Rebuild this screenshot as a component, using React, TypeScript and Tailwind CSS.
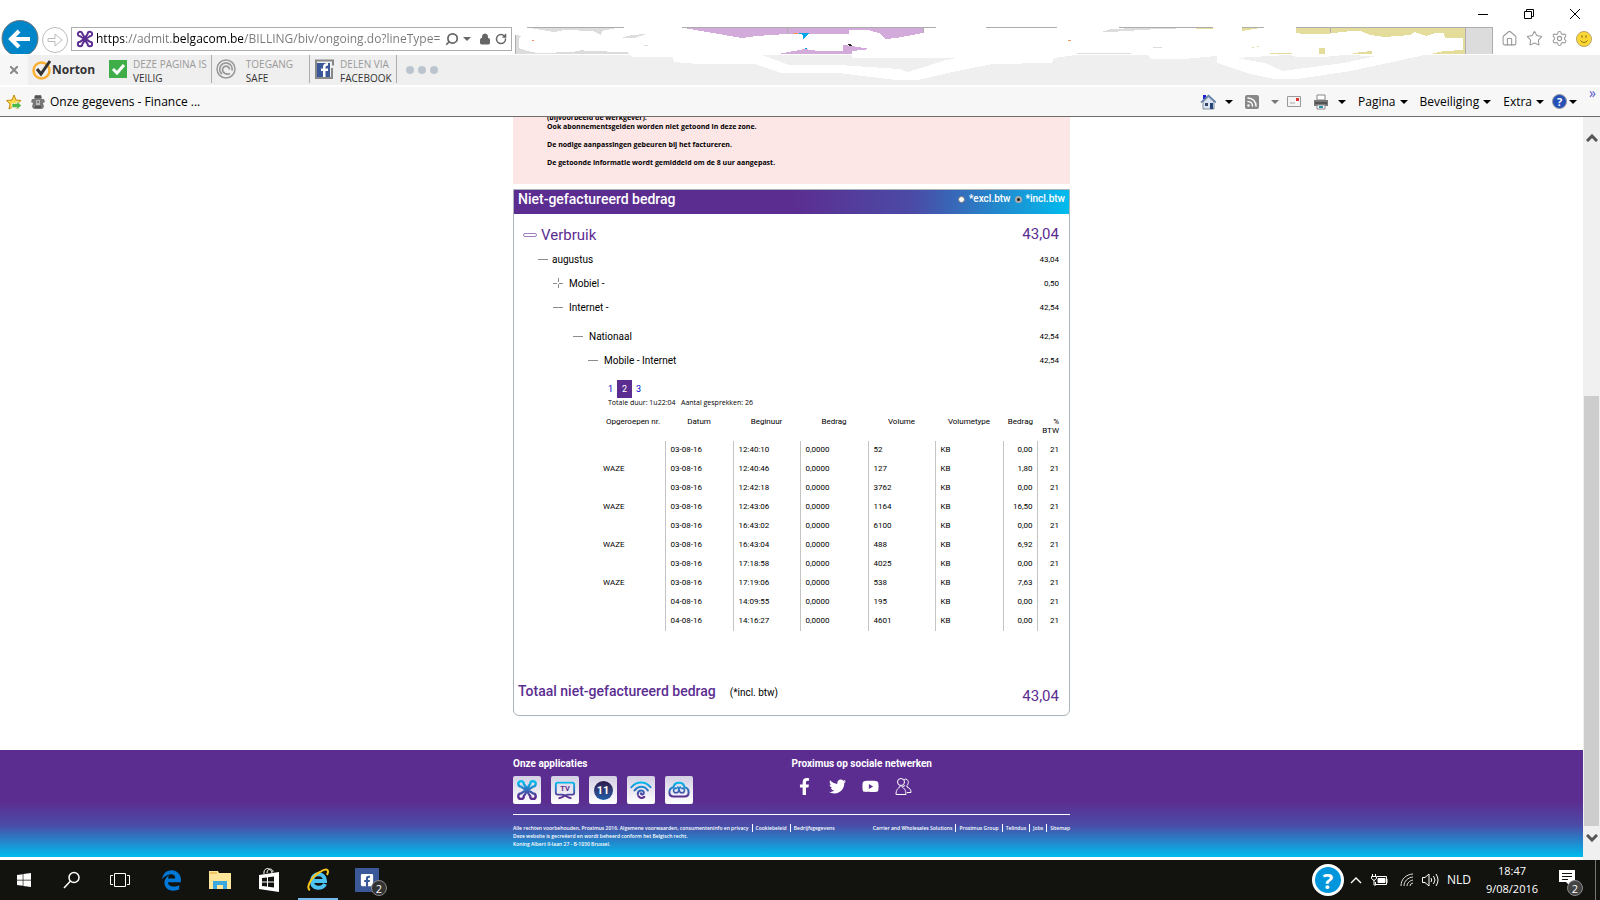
import type { ReactNode } from 'react'
import { FaFacebookF, FaFacebookSquare, FaTwitter, FaYoutube, FaWindows, FaEdgeLegacy } from 'react-icons/fa'
import { Search, Lock, RotateCw, Settings, Star, House, Rss } from 'lucide-react'

interface Call {
  number: string
  date: string
  time: string
  volume: string
  amount: string
}

const calls: Call[] = [
  { number: '', date: '03-08-16', time: '12:40:10', volume: '52', amount: '0,00' },
  { number: 'WAZE', date: '03-08-16', time: '12:40:46', volume: '127', amount: '1,80' },
  { number: '', date: '03-08-16', time: '12:42:18', volume: '3762', amount: '0,00' },
  { number: 'WAZE', date: '03-08-16', time: '12:43:06', volume: '1164', amount: '16,50' },
  { number: '', date: '03-08-16', time: '16:43:02', volume: '6100', amount: '0,00' },
  { number: 'WAZE', date: '03-08-16', time: '16:43:04', volume: '488', amount: '6,92' },
  { number: '', date: '03-08-16', time: '17:18:58', volume: '4025', amount: '0,00' },
  { number: 'WAZE', date: '03-08-16', time: '17:19:06', volume: '538', amount: '7,63' },
  { number: '', date: '04-08-16', time: '14:09:55', volume: '195', amount: '0,00' },
  { number: '', date: '04-08-16', time: '14:16:27', volume: '4601', amount: '0,00' },
]

function Knot({ stroke, className }: { stroke: string; className: string }) {
  return (
    <svg viewBox="0 0 24 24" fill="none" stroke={stroke} strokeWidth="2.6" className={className}>
      <path d="M8.500 5.300A3 3 0 1 0 5.500 8.300Q12 14 18.500 8.300A3 3 0 1 0 15.500 5.300Q9.500 12 15.500 18.700A3 3 0 1 0 18.500 15.700Q12 10 5.500 15.700A3 3 0 1 0 8.500 18.700Q14.500 12 8.500 5.300z" />
    </svg>
  )
}

function Caret({ className = 'text-black' }: { className?: string }) {
  return (
    <svg viewBox="0 0 8 4" className={`h-1 w-2 shrink-0 ${className}`} fill="currentColor">
      <path d="M0 0h8L4 4z" />
    </svg>
  )
}

/* Tab strip, mostly painted over in white */
function TabStrip() {
  return (
    <svg className="relative z-10 ml-[2px] h-[27px] w-[980px] shrink-0 overflow-visible" shapeRendering="crispEdges">
      <g fill="#dcdcdc">
        <path d="M16 1L40 5L50 3L79 4L87 8L88 4L102 1z" />
        <path d="M2 8L8 9L5 11V21L13 24L24 26L59 25L68 23L72 24L113 25L115 27H2z" />
        <path d="M107 11L118 8L132 7L120 11z M130 18h4v1h-4z" />
        <path d="M587 5L597 2L622 1H680L644 2L612 4L596 5z M563 26h54v1h-54z M639 20h9v1h-9z M952 1h26v26h-26z" />
      </g>
      <g fill="#d3abda">
        <path d="M170 1L228 11L243 9L273 7H335V3H354L365 6L371 12L382 11L393 9L409 6V1z" />
        <path d="M264 27L291 22L304 24H329V18L338 19L356 22L338 24V27z" />
      </g>
      <g fill="#e4dc9a">
        <path d="M682 1h17v1h-17z M728 1h18L728 4z" />
        <path d="M782 1V6L790 7H812L837 4H847L856 8L871 10L896 8L901 5L912 9L921 6H930L931 11H951V1z" />
        <path d="M951 11V27H917L930 24L949 23V11z M756 26h22v1h-22z M805 21h6v6h-6z M836 27L847 25L858 24V27z" />
        <path d="M738 20h2v1h-2z M743 19h2v1h-2z" />
      </g>
      <path
        d="M13 0h97v1H13z M168 0h254v1H168z M472 0h71v1h-71z M605 0h94v1h-94z M728 0h22v1h-22z M782 0h196v1H782z M1 8h1v19H1z M273 1h1v6h-1z M409 1h1v5h-1z M816 1h1v5h-1z M951 1h1v26h-1z M978 0h1v27h-1z"
        fill="#adadad"
      />
      <path d="M279 6h5v1h-5z M18 13h2v1h-2z M554 13h3v1h-3z" fill="#f29264" />
      <path d="M284 6h11l-2 3l-4 3v-4z M291 21h2v1h-2z" fill="#00a4e8" />
      <path d="M333 17h3l3 2h-3z" fill="#29202c" />
      <path
        fill="#fff"
        fillRule="evenodd"
        d="M115 27L118 30H159L160 35L184 37H240L268 46H325L382 53H404L443 44L479 37L538 36L540 31L562 28H633L637 32H669L703 29V36L737 47L760 52H783L837 44L883 34L915 27z M248 28L275 38L325 38L386 42L393 45L407 41L432 33L443 31H338V28z M722 31L751 36L769 44L783 42L830 36L862 29L830 28L810 30H783L776 28L755 29z"
      />
    </svg>
  )
}

function NortonItem({ icon, top, bottom, wide }: { icon: ReactNode; top: string; bottom: string; wide?: boolean }) {
  return (
    <div className={`flex h-7 items-center gap-1.5 border-r border-[#adadad] pl-1 ${wide ? 'pr-4' : 'pr-1'}`}>
      {icon}
      <div className="pt-1 text-[10px] leading-[14px]">
        <div className="text-[#9a9a9a]">{top}</div>
        <div className="text-[#333]">{bottom}</div>
      </div>
    </div>
  )
}

function BrowserChrome() {
  return (
    <header className="shrink-0 border-b border-[#6d6d6d] bg-white font-['Open_Sans',sans-serif] text-black">
      <div className="flex h-[27px] items-center justify-end gap-[34px] pr-[19px]">
        <button aria-label="Minimaliseren">
          <svg className="size-3" stroke="#000" fill="none"><path d="M1 6.5h10" /></svg>
        </button>
        <button aria-label="Verkleinen">
          <svg className="size-3" stroke="#000" fill="none"><path d="M1.500 3.500h7v7h-7z M3.500 3.500v-2h7v7h-2" /></svg>
        </button>
        <button aria-label="Sluiten">
          <svg className="size-3" stroke="#000" fill="none"><path d="M1 1l10 10M11 1l-10 10" /></svg>
        </button>
      </div>

      <div className="flex h-[27px]">
        <button aria-label="Terug" className="relative ml-px w-[38px] shrink-0">
          <svg viewBox="0 0 38 34" className="absolute bottom-0 left-0 h-[34px] w-[38px]">
            <circle cx="19" cy="18.500" r="18" fill="#0086c8" stroke="#777" />
            <path d="M29 19H11M18 11l-8 8 8 8" stroke="#fff" strokeWidth="4" fill="none" />
          </svg>
        </button>
        <button aria-label="Vooruit" className="ml-[3px] shrink-0 pb-1">
          <svg viewBox="0 0 26 26" className="size-[26px]" fill="#fff" stroke="#bbb">
            <circle cx="13" cy="13" r="12.500" />
            <path d="M6 11.500h7V7l7 6-7 6v-4.500H6z" />
          </svg>
        </button>
        <form className="ml-[3px] flex h-6 w-[441px] shrink-0 items-center border border-[#adadad] pl-1 pr-1">
          <Knot stroke="#5c2d91" className="size-[18px] shrink-0" />
          <input
            aria-label="Adres"
            readOnly
            defaultValue="https://admit.belgacom.be/BILLING/biv/ongoing.do?lineType=MOBILE"
            className="ml-0.5 w-[346px] bg-[linear-gradient(90deg,#000_0_29px,#777_29px_76px,#000_76px_147px,#777_147px)] bg-clip-text text-xs text-transparent outline-none"
          />
          <Search className="ml-1 size-[14px] shrink-0 -scale-x-100 text-[#666]" strokeWidth={3} />
          <Caret className="ml-1 text-[#666]" />
          <Lock className="ml-2 size-3 shrink-0 text-[#666]" fill="#666" />
          <RotateCw className="ml-1 size-3 shrink-0 text-[#666]" strokeWidth={3} />
        </form>
        <TabStrip />
        <div className="ml-auto flex items-center gap-2 pb-1 pr-2 text-[#999]">
          <House className="size-[17px]" strokeWidth={1.5} />
          <Star className="size-[17px]" strokeWidth={1.5} />
          <Settings className="size-[17px]" strokeWidth={1.5} />
          <svg viewBox="0 0 16 16" className="size-4">
            <circle cx="8" cy="8" r="7.500" fill="#fdd835" stroke="#b9a26a" />
            <path d="M6 4v3M10 4v3M4.500 9.500q3.500 4 7 0" stroke="#8a6d1a" fill="none" />
          </svg>
        </div>
      </div>

      <div className="mt-px flex h-[30px] bg-[#efefef]">
        <button className="w-7 shrink-0 bg-[#f7f7f7]" aria-label="Werkbalk sluiten">
          <svg viewBox="0 0 8 8" className="mx-auto size-2" stroke="#888" strokeWidth="2"><path d="M0 0l8 8M8 0l-8 8" /></svg>
        </button>
        <div className="ml-1 flex w-[73px] items-center">
          <svg viewBox="0 0 20 20" className="size-5 shrink-0" fill="none">
            <circle cx="9.500" cy="10.500" r="8" stroke="#fbb034" strokeWidth="2.500" />
            <path d="M5 9l4 5L18 1" stroke="#333" strokeWidth="3" />
          </svg>
          <span className="text-xs font-bold text-[#333]">Norton</span>
        </div>
        <NortonItem
          top="DEZE PAGINA IS"
          bottom="VEILIG"
          icon={<svg viewBox="0 0 18 18" className="size-[18px]"><path d="M0 0h18v18H0z" fill="#3fae49" /><path d="M4 9l4 4 7-8" stroke="#fff" strokeWidth="3" fill="none" /></svg>}
        />
        <NortonItem
          wide
          top="TOEGANG"
          bottom="SAFE"
          icon={
            <svg viewBox="0 0 20 20" className="mr-1 size-5" fill="none" stroke="#999">
              <circle cx="10" cy="10" r="9" strokeWidth="1.500" />
              <path d="M6 15A6.200 6.200 0 1 1 16 11.500M14 14.500A5.500 5.500 0 0 1 7 12.500A3.500 3.500 0 1 1 13.500 10.500" strokeWidth="1.800" />
            </svg>
          }
        />
        <NortonItem
          top="DELEN VIA"
          bottom="FACEBOOK"
          icon={
            <svg viewBox="0 0 20 20" className="size-5">
              <path d="M15 1.500H2V19h16V9M13 1.500h6v5" stroke="#888" strokeWidth="2" fill="none" />
              <path d="M3 4h13v14H3z" fill="#3b5998" />
              <path d="M11.500 18v-6H14V9.500h-2.500V8q0-1.500 2.500-1.500V4q-5 0-5 4v1.500H7V12h2v6z" fill="#fff" />
            </svg>
          }
        />
        <div className="ml-[9px] flex items-center gap-1">
          <span className="size-2 rounded-full bg-[#bcc5ce]" />
          <span className="size-2 rounded-full bg-[#bcc5ce]" />
          <span className="size-2 rounded-full bg-[#bcc5ce]" />
        </div>
      </div>

      <nav className="mt-0.5 flex h-[29px] items-center bg-[#f7f7f7] text-xs">
        <svg viewBox="0 0 16 16" className="ml-1.5 size-4 shrink-0">
          <path d="M8 1l2 5 5 .5-4 3.500 1 5-4.500-2.500L3 15l1-5L.5 6.500 6 6z" fill="#ffd84a" stroke="#c58a12" />
          <path d="M6 9.500h5v-2l4.500 4-4.500 4v-2H6z" fill="#4cb848" stroke="#fff" strokeWidth=".6" />
        </svg>
        <svg viewBox="0 0 16 16" className="ml-2 size-4 shrink-0" fill="#777">
          <path d="M5 1h6l1 3-1 1h3l1 3-2 1 1 4-2 2H4l-2-2 1-4-2-1 1-3h3L4 4z" />
          <path d="M6 6h4v5H6z" fill="#bbb" />
          <path d="M5 3h6M7 8h2M5 13h6" stroke="#333" />
        </svg>
        <a href="#" className="ml-1">Onze gegevens - Finance ...</a>
        <div className="ml-auto flex items-center self-stretch">
          <svg viewBox="0 0 16 16" className="size-4">
            <path d="M3 1h3v4H3z" fill="#22c" />
            <path d="M3 8v7h11V8L8.500 3z" fill="#dce6f2" stroke="#567" strokeWidth=".7" />
            <path d="M1 8.500L8.500 1.500 16 8.500" stroke="#5a7aa8" strokeWidth="1.500" fill="none" />
            <path d="M5 9h3v3H5z" fill="#346" />
            <path d="M10 9h3v6h-3z" fill="#247" />
          </svg>
          <span className="ml-[9px]"><Caret /></span>
          <span className="ml-3 grid size-[14px] place-items-center rounded-xs bg-[#888]"><Rss className="size-3 text-white" strokeWidth={3} /></span>
          <span className="ml-3"><Caret className="text-[#777]" /></span>
          <svg viewBox="0 0 14 11" className="ml-2 h-[11px] w-[14px]">
            <path d="M.5.500h13v10H.5z" fill="#f4f4f4" stroke="#999" />
            <path d="M9 2h3v3H9z" fill="#d33" />
            <path d="M3 7h5" stroke="#aaa" />
          </svg>
          <svg viewBox="0 0 16 16" className="ml-3 size-4">
            <path d="M4 1h8v5H4z" fill="#fff" stroke="#888" />
            <path d="M1 6h14v6H1z" fill="#777" />
            <path d="M2 9h12" stroke="#333" />
            <path d="M4 11h8v4H4z" fill="#fff" stroke="#888" />
            <path d="M6 13h4" stroke="#2a8fa8" strokeWidth="2" />
          </svg>
          <span className="ml-[9px]"><Caret /></span>
          <button className="ml-3 flex items-center gap-1">Pagina <Caret /></button>
          <button className="ml-3 flex items-center gap-1">Beveiliging <Caret /></button>
          <button className="ml-3 flex items-center gap-1">Extra <Caret /></button>
          <button aria-label="Help" className="ml-2 flex items-center gap-0.5">
            <span className="grid size-[15px] place-items-center rounded-full border border-[#999] bg-[#2450b8] text-[11px] leading-none font-bold text-white">?</span>
            <Caret />
          </button>
          <span className="ml-3 mr-1 self-start text-sm leading-[12px] text-[#55c]">»</span>
        </div>
      </nav>
    </header>
  )
}

interface TreeRowProps {
  label: string
  value: string
  indent: string
  gap?: string
  collapsed?: boolean
}

function TreeRow({ label, value, indent, gap = 'gap-[6px]', collapsed }: TreeRowProps) {
  return (
    <div className={`flex h-6 items-center ${indent}`}>
      <button className={`flex items-center text-[10px] ${gap}`}>
        <svg viewBox="0 0 10 10" className="size-[10px]" stroke="#8c8c8c">
          <path d={collapsed ? 'M0 5.500h4M6 5.500h4M5.500 0v4M5.500 6v4' : 'M0 5.500h10'} />
        </svg>
        {label}
      </button>
      <span className="ml-auto pt-0.5 text-[8px]">{value}</span>
    </div>
  )
}

function CallTable() {
  const cell = 'border-l border-[#c4c4c4] px-[5px] pb-0.5 text-left'
  return (
    <table className="w-full table-fixed border-collapse text-[8px] leading-[9px]">
      <colgroup>
        <col />
        <col className="w-[68px]" />
        <col className="w-[67px]" />
        <col className="w-[68px]" />
        <col className="w-[67px]" />
        <col className="w-[68px]" />
        <col className="w-[34px]" />
        <col className="w-[22px]" />
      </colgroup>
      <thead>
        <tr className="h-6 align-top [&>th]:font-normal">
          <th>Opgeroepen nr.</th>
          <th>Datum</th>
          <th>Beginuur</th>
          <th>Bedrag</th>
          <th>Volume</th>
          <th>Volumetype</th>
          <th className="pr-1 text-right">Bedrag</th>
          <th className="text-right">% BTW</th>
        </tr>
      </thead>
      <tbody>
        {calls.map((c) => (
          <tr key={c.time} className="h-[19px]">
            <td className="pb-0.5 pl-[2px]">{c.number}</td>
            <td className={cell}>{c.date}</td>
            <td className={cell}>{c.time}</td>
            <td className={cell}>0,0000</td>
            <td className={cell}>{c.volume}</td>
            <td className={cell}>KB</td>
            <td className="border-l border-[#c4c4c4] pr-1 pb-0.5 text-right">{c.amount}</td>
            <td className="border-l border-[#c4c4c4] pb-0.5 text-right">21</td>
          </tr>
        ))}
      </tbody>
    </table>
  )
}

function BillingCard() {
  return (
    <section className="mt-[5px] rounded-b-md border border-[#a9b4bb]">
      <div className="flex h-6 items-center bg-[linear-gradient(90deg,#5c2d91_50%,#4b4ba6_72%,#00bcee)] px-1 pb-1.5 text-white">
        <h1 className="text-sm leading-[18px] font-medium">Niet-gefactureerd bedrag</h1>
        <label className="ml-auto flex items-center gap-1 text-[10px] leading-3 font-medium">
          <input type="radio" name="btw" className="size-[7px] appearance-none rounded-full border border-[#777] bg-white" />
          *excl.btw
        </label>
        <label className="ml-1 flex items-center gap-1 text-[10px] leading-3 font-medium">
          <input type="radio" name="btw" defaultChecked className="size-[7px] appearance-none rounded-full border border-[#777] bg-white checked:border-2 checked:border-[#aaa] checked:bg-[#222]" />
          *incl.btw
        </label>
      </div>

      <div className="pl-[5px] pr-[10px] pt-[9px]">
        <div className="flex h-6 items-center pl-1 text-[#5c2d91]">
          <button className="flex items-center gap-1 text-[15px]">
            <svg viewBox="0 0 14 5" className="h-[5px] w-[14px]" fill="#fff" stroke="#9d80bd">
              <rect x=".5" y=".5" width="13" height="3" rx="1.500" />
            </svg>
            Verbruik
          </button>
          <span className="ml-auto pb-0.5 text-[15px]">43,04</span>
        </div>
        <TreeRow indent="pl-[19px]" label="augustus" value="43,04" gap="gap-1" />
        <TreeRow indent="pl-[34px]" label="Mobiel -" value="0,50" collapsed />
        <TreeRow indent="pl-[34px]" label="Internet -" value="42,54" />
        <div className="mt-[5px]">
          <TreeRow indent="pl-[54px]" label="Nationaal" value="42,54" />
          <TreeRow indent="pl-[69px]" label="Mobile - Internet" value="42,54" />
        </div>

        <div className="mt-2 pl-[82px]">
          <div className="flex h-[18px] items-center gap-1 pl-[7px] text-[9px] leading-4">
            <a href="#" className="text-[#00c]">1</a>
            <a href="#" className="flex h-[18px] w-[15px] items-center justify-center bg-[#5c2d91] text-white">2</a>
            <a href="#" className="text-[#00c]">3</a>
          </div>
          <p className="pl-[7px] font-['Open_Sans',sans-serif] text-[7px] leading-[9px] font-medium">
            Totale duur: 1u22:04 &nbsp; Aantal gesprekken: 26
          </p>
          <div className="mt-[10px]">
            <CallTable />
          </div>
        </div>
      </div>

      <div className="mt-12 flex items-start pl-1 pr-[10px] pb-[7px] text-[#5c2d91]">
        <h2 className="text-sm leading-6 font-medium">Totaal niet-gefactureerd bedrag</h2>
        <span className="ml-[14px] pt-0.5 text-[10px] leading-6 text-black">(*incl. btw)</span>
        <span className="ml-auto pt-[5px] text-[15px] leading-6">43,04</span>
      </div>
    </section>
  )
}

function AppTile({ children }: { children: ReactNode }) {
  return (
    <a href="#" className="grid size-7 place-items-center rounded-xs bg-linear-to-b from-[#d4cfe3] to-white">
      {children}
    </a>
  )
}

function Footer() {
  const legal = 'flex items-center whitespace-nowrap [&>a]:border-l [&>a]:border-white [&>a]:px-[3px] [&>a:first-child]:border-0 [&>a:last-child]:pr-0 [&>a:first-child]:pl-0'
  return (
    <footer className="mt-[34px] bg-[linear-gradient(180deg,#5c2d91_48%,#4b4ba6_70%,#00bcee)] text-white">
      <svg className="absolute size-0" aria-hidden="true">
        <linearGradient id="brand" x1="0" y1="0" x2="0" y2="24" gradientUnits="userSpaceOnUse">
          <stop offset=".15" stopColor="#00bcee" />
          <stop offset=".8" stopColor="#5c2d91" />
        </linearGradient>
      </svg>
      <div className="mx-auto h-[107px] w-full max-w-[557px] pt-2">
        <div className="grid grid-cols-2 border-b border-white pb-[10px]">
          <div>
            <h3 className="text-[10px] leading-3 font-bold">Onze applicaties</h3>
            <div className="mt-1.5 flex gap-[10px]">
              <AppTile><Knot stroke="url(#brand)" className="size-[22px]" /></AppTile>
              <AppTile>
                <svg viewBox="0 0 24 24" className="size-[22px]" fill="none" stroke="url(#brand)" strokeWidth="2">
                  <path d="M9 17H4a2 2 0 0 1-2-2V6a2 2 0 0 1 2-2h16a2 2 0 0 1 2 2v9a2 2 0 0 1-2 2h-5C11 17 10 21 5 21M9 17C13 17 14 21 19 21" />
                  <text x="12" y="13.500" textAnchor="middle" fontSize="8" fontWeight="700" fill="#5c2d91" stroke="none">TV</text>
                </svg>
              </AppTile>
              <AppTile>
                <span className="grid size-[19px] place-items-center rounded-full bg-linear-to-b from-[#2c1a4c] to-[#1b5fa8] text-[11px] leading-none font-bold">11</span>
              </AppTile>
              <AppTile>
                <svg viewBox="0 0 24 24" className="size-[22px]" fill="none" stroke="url(#brand)" strokeWidth="2.200" strokeLinecap="round">
                  <path d="M1.500 9C7 2 17 2 22.500 9M5 12.500C9 7 16 7 19.500 12.500M8.500 16.500C8.500 11 15.500 11.500 15 15.500C14.500 17.500 11.500 17 12 15.500M9 18.500Q12 22.500 15.500 19.500" />
                </svg>
              </AppTile>
              <AppTile>
                <svg viewBox="0 0 24 24" className="size-[22px]" fill="none" stroke="url(#brand)" strokeWidth="2.200">
                  <path d="M6 9C7 2.500 17 2.500 18 9C24 10 24 19 18 19H6C0 19 0 10 6 9z" />
                  <path d="M10 8.500C13 10 12 15 9 15A2.500 2.500 0 1 1 10 10.500M14 8.500C11 10 12 15 15 15A2.500 2.500 0 1 0 14 10.500" strokeWidth="1.800" />
                </svg>
              </AppTile>
            </div>
          </div>
          <div>
            <h3 className="text-[10px] leading-3 font-bold">Proximus op sociale netwerken</h3>
            <div className="mt-2 ml-1 flex gap-4">
              <a href="#" aria-label="Facebook"><FaFacebookF className="size-[17px]" /></a>
              <a href="#" aria-label="Twitter"><FaTwitter className="size-[17px]" /></a>
              <a href="#" aria-label="YouTube"><FaYoutube className="size-[17px]" /></a>
              <a href="#" aria-label="Forum">
                <svg viewBox="0 0 17 17" className="size-[17px]" fill="none" stroke="#fff">
                  <circle cx="6" cy="4" r="3.500" />
                  <path d="M1 16.500C1 12 3 10 5 9V7.500M11 16.500C11 12 9 10 7 9V7.500M1 16.500h10" />
                  <path d="M9 2Q10.500.5 12 1.500C14 3 13.500 6 12 7.500V9c3 1 4 3 4 5.500h-4M9.500 7l-1 2" />
                </svg>
              </a>
            </div>
          </div>
        </div>
        <div className="mt-[9px] flex justify-between font-['Open_Sans',sans-serif] text-[5px] leading-2 font-semibold">
          <div>
            <div className={legal}>
              <a href="#">Alle rechten voorbehouden, Proximus 2016. Algemene voorwaarden, consumenteninfo en privacy</a>
              <a href="#">Cookiebeleid</a>
              <a href="#">Bedrijfsgegevens</a>
            </div>
            <p>Deze website is gecreëerd en wordt beheerd conform het Belgisch recht.</p>
            <p>Koning Albert II-laan 27 - B-1030 Brussel.</p>
          </div>
          <div className={`${legal} self-start`}>
            <a href="#">Carrier and Wholesales Solutions</a>
            <a href="#">Proximus Group</a>
            <a href="#">Telindus</a>
            <a href="#">Jobs</a>
            <a href="#">Sitemap</a>
          </div>
        </div>
      </div>
    </footer>
  )
}

function Scrollbar() {
  return (
    <div className="flex w-[17px] shrink-0 flex-col items-center bg-[#f0f0f0] pb-[18px] pt-[17px]">
      <svg viewBox="0 0 12 8" className="h-2 w-3" fill="none" stroke="#555" strokeWidth="3"><path d="M1 7l5-5 5 5" /></svg>
      <div className="grow-[254]" />
      <div className="w-[15px] grow-[430] bg-[#cdcdcd]" />
      <svg viewBox="0 0 12 8" className="mt-2 h-2 w-3" fill="none" stroke="#555" strokeWidth="3"><path d="M1 1l5 5 5-5" /></svg>
    </div>
  )
}

function TaskButton({ label, active, children }: { label: string; active?: boolean; children: ReactNode }) {
  return (
    <button
      aria-label={label}
      className={`relative grid h-10 w-12 place-items-center ${active ? 'bg-[linear-gradient(#76b9ed,#76b9ed)] bg-[size:40px_2px] bg-bottom bg-no-repeat' : ''}`}
    >
      {children}
    </button>
  )
}

function Taskbar() {
  return (
    <footer className="flex h-10 shrink-0 items-center bg-[#12120f] font-['Open_Sans',sans-serif] text-xs text-white">
      <TaskButton label="Start"><FaWindows className="size-4" /></TaskButton>
      <TaskButton label="Zoeken">
        <svg viewBox="0 0 18 18" className="size-[18px]" fill="none" stroke="#fff" strokeWidth="1.500"><circle cx="11" cy="6.500" r="5" /><path d="M7.500 10L1 17" /></svg>
      </TaskButton>
      <TaskButton label="Taakweergave">
        <svg viewBox="0 0 20 14" className="h-[14px] w-5" fill="none" stroke="#fff"><path d="M4.500.5h11v13h-11zM3 2.500H.5v9H3M17 2.500h2.500v9H17" /></svg>
      </TaskButton>
      <div className="ml-[3px] flex gap-px">
        <TaskButton label="Edge"><FaEdgeLegacy className="size-[21px] text-[#0078d7]" /></TaskButton>
        <TaskButton label="Verkenner">
          <svg viewBox="0 0 22 18" className="h-[18px] w-[22px]">
            <path d="M0 0h9l1 2h12v16H0z" fill="#fde59a" />
            <path d="M1 2h7" stroke="#e3a82b" />
            <path d="M4 10h14v8h-4v-4H8v4H4z" fill="#3aa9e0" />
          </svg>
        </TaskButton>
        <TaskButton label="Store">
          <svg viewBox="0 0 22 24" className="h-6 w-[22px]">
            <path d="M1 7l20-3v20L1 21z" fill="#fff" />
            <path d="M6 6C5-1 13-1 14 5M9 5C9 0 15 0 15 4" stroke="#fff" fill="none" />
            <path d="M4 10l5-.5v4H4zM10 9.300l6-.8v5h-6zM4 14.500h5v4L4 18zM10 14.500h6v5l-6-.8z" fill="#12120f" />
          </svg>
        </TaskButton>
        <TaskButton label="Internet Explorer" active>
          <svg viewBox="0 0 24 24" className="size-6" fill="none">
            <path d="M19 16C17 21 6 22 6 13C6 4 19 4 19 13H7" stroke="#4cc3f2" strokeWidth="4" />
            <path d="M4 22C-1 20 6 8 14 4C20 0 24 1 21 7" stroke="#f7c61e" strokeWidth="2" />
          </svg>
        </TaskButton>
        <TaskButton label="Facebook">
          <span className="grid size-6 place-items-center bg-[#3b5998]"><FaFacebookSquare className="size-[14px]" /></span>
          <span className="absolute right-1 bottom-1 grid size-4 place-items-center rounded-full border border-[#888] bg-[#333] text-[11px] leading-none">2</span>
        </TaskButton>
      </div>

      <div className="ml-auto flex items-center">
        <button aria-label="Help" className="grid size-8 place-items-center rounded-full border-[3px] border-white bg-[#0096db] text-[22px] leading-none font-bold">?</button>
        <svg viewBox="0 0 12 8" className="ml-1.5 h-2 w-3" fill="none" stroke="#fff" strokeWidth="1.400"><path d="M1 7l5-5 5 5" /></svg>
        <svg viewBox="0 0 17 12" className="ml-[9px] h-3 w-[17px]" fill="none" stroke="#fff">
          <path d="M6 2.500h9.500v8h-11V8M17 5v4" /><path d="M7 4.500h7v4H7z" fill="#fff" />
          <path d="M1.500 0v2M4.500 0v2M.5 2.500h5v2L3 6.500.500 4.500zM3 6v5h2" />
        </svg>
        <svg viewBox="0 0 14 14" className="ml-3 size-[14px]" fill="none" stroke="#ddd">
          <path d="M1 13C1 6 6 1.500 13 1M4 13C4 8 8 4.500 13 4M7 13C7 10 10 7.500 13 7M10 13q0-2.500 3-3" />
        </svg>
        <svg viewBox="0 0 17 14" className="ml-2 h-[14px] w-[17px]" fill="none" stroke="#fff">
          <path d="M.5 4.500h2.500L7 1v12L3 9.500H.5zM9 5q1.500 2 0 4M11.500 3q3 4 0 8M14 1q4 6 0 12" />
        </svg>
        <span className="ml-2">NLD</span>
        <div className="ml-[14px] w-[54px] text-center text-[11px] leading-[18px] whitespace-nowrap">
          <div>18:47</div>
          <div>9/08/2016</div>
        </div>
        <button aria-label="Meldingen" className="relative ml-5 h-6 w-6">
          <svg viewBox="0 0 16 16" className="absolute top-0.5 left-0 size-4">
            <path d="M0 0h16v12h-5v4l-4-4H0z" fill="#fff" /><path d="M3 3.500h10M3 6.500h10M3 9.500h6" stroke="#12120f" />
          </svg>
          <span className="absolute right-0 -bottom-1 grid size-4 place-items-center rounded-full border border-[#888] bg-[#444] text-[11px] leading-none">2</span>
        </button>
        <div className="ml-3 mr-1 h-10 border-l border-[#777]" />
      </div>
    </footer>
  )
}

export default function App() {
  return (
    <div className="flex h-screen flex-col overflow-hidden bg-white">
      <BrowserChrome />
      <div className="flex min-h-0 flex-1">
        <div className="min-w-0 flex-1 overflow-hidden font-['Roboto',sans-serif] text-black">
          <main className="mx-auto w-full max-w-[557px]">
            <div className="flex h-[67px] flex-col justify-end overflow-hidden bg-[#fde6e6] pl-[34px] pb-[17px] font-['Open_Sans',sans-serif] text-[7px] leading-[9px] font-bold">
              <p>(bijvoorbeeld de werkgever).</p>
              <p>Ook abonnementsgelden worden niet getoond in deze zone.</p>
              <p className="mt-[9px]">De nodige aanpassingen gebeuren bij het factureren.</p>
              <p className="mt-[9px]">De getoonde informatie wordt gemiddeld om de 8 uur aangepast.</p>
            </div>
            <BillingCard />
          </main>
          <Footer />
        </div>
        <Scrollbar />
      </div>
      <Taskbar />
    </div>
  )
}
